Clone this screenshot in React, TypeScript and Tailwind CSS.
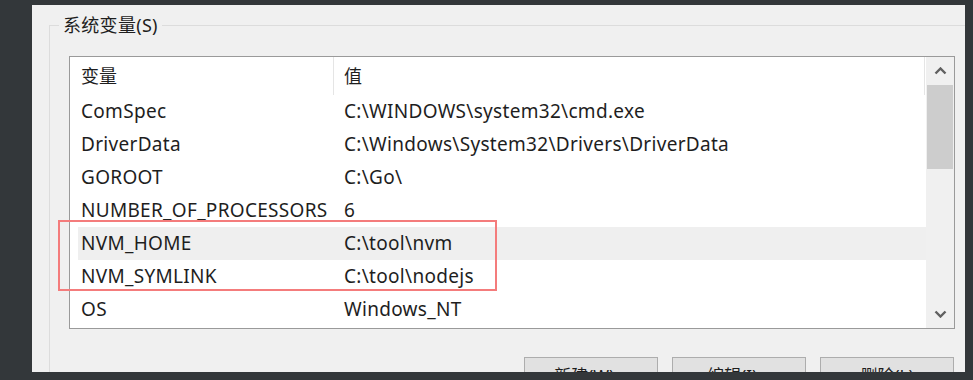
const rows = [
  { name: "ComSpec", value: "C:\\WINDOWS\\system32\\cmd.exe" },
  { name: "DriverData", value: "C:\\Windows\\System32\\Drivers\\DriverData" },
  { name: "GOROOT", value: "C:\\Go\\" },
  { name: "NUMBER_OF_PROCESSORS", value: "6" },
  { name: "NVM_HOME", value: "C:\\tool\\nvm", selected: true },
  { name: "NVM_SYMLINK", value: "C:\\tool\\nodejs" },
  { name: "OS", value: "Windows_NT" },
];

function Chevron({ down }: { down?: boolean }) {
  return (
    <svg width="13" height="8" viewBox="0 0 13 8" className={down ? "rotate-180" : ""}>
      <path d="M1.5 6.5 L6.5 1.5 L11.5 6.5" fill="none" stroke="#606060" strokeWidth="2.4" />
    </svg>
  );
}

export default function App() {
  return (
    <div className="w-[973px] h-[380px] bg-[#33373a] pt-[5px] pl-[32px] pr-[8px] pb-[8px] font-['Noto_Sans','Noto_Sans_CJK_SC',sans-serif] text-[#1e1e1e]">
      <div className="relative h-full overflow-hidden bg-[#f0f0f0] pt-[20px] pl-[17px]">
        {/* group box */}
        <div className="relative h-[400px] border-t border-l border-[#dcdcdc] pt-[30px] pl-[19px]">
          <span className="absolute left-[9px] -top-[14px] bg-[#f0f0f0] px-[4px] text-[18px] leading-[26px] tracking-[0.3px]">
            系统变量(S)
          </span>

          <div className="flex w-[886px] h-[273px] border border-[#9a9a9a] bg-white">
            <div className="flex-1">
              <div className="flex h-[38px] w-[855px] text-[18px]">
                <div className="flex w-[264px] items-center border-r border-[#e5e5e5] pl-[11px]">变量</div>
                <div className="flex flex-1 items-center border-r border-[#e5e5e5] pl-[10px]">值</div>
              </div>
              {rows.map((r) => (
                <div
                  key={r.name}
                  className={`ml-[8px] flex h-[33px] items-center text-[19px] tracking-[0.3px] ${r.selected ? "bg-[#efefef]" : ""}`}
                >
                  <div className="w-[255px] pl-[3px] whitespace-nowrap">{r.name}</div>
                  <div className="pl-[11px] whitespace-nowrap">{r.value}</div>
                </div>
              ))}
            </div>
            <div className="flex w-[28px] flex-col bg-[#f0f0f0]">
              <div className="flex h-[28px] items-center justify-center">
                <Chevron />
              </div>
              <div className="mx-[1px] h-[84px] bg-[#cdcdcd]" />
              <div className="flex-1" />
              <div className="flex h-[28px] items-center justify-center">
                <Chevron down />
              </div>
            </div>
          </div>

          <div className="mt-[28px] flex w-[886px] justify-end gap-[14px] pr-[1px] text-[17px]">
            {["新建(W)...", "编辑(I)...", "删除(L)"].map((b) => (
              <div
                key={b}
                className="flex h-[38px] w-[134px] items-center justify-center border border-[#adadad] bg-[#e1e1e1]"
              >
                {b}
              </div>
            ))}
          </div>
        </div>

        {/* red highlight annotation */}
        <div className="absolute left-[26px] top-[215px] h-[71px] w-[439px] border-2 border-[#f47c7c]" />
      </div>
    </div>
  );
}
